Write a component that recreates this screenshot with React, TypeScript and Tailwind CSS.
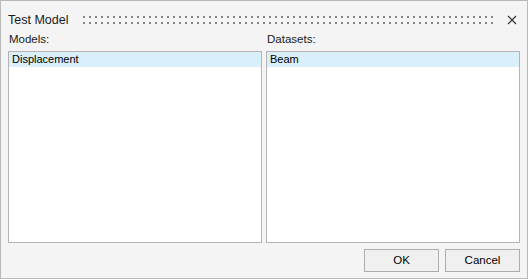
import React from "react";

const font = { fontFamily: '"Liberation Sans", Arial, sans-serif' };

function Grip() {
  const dots = Array.from({ length: 70 });
  return (
    <div className="flex flex-col gap-[4px] overflow-hidden flex-1 ml-[15px] mr-[12px]">
      {[0, 1].map((r) => (
        <div key={r} className="flex gap-[4px]">
          {dots.map((_, i) => (
            <div key={i} className="w-[2px] h-[2px] shrink-0 bg-[#858585]" />
          ))}
        </div>
      ))}
    </div>
  );
}

function List({ label, item }: { label: string; item: string }) {
  return (
    <div className="flex flex-col w-[254px]">
      <div className="h-[20px] text-[11.5px] leading-[16px] text-[#1a1a1a] pl-[1px]">{label}</div>
      <div className="h-[192px] border border-[#b4b4b4] bg-white p-0">
        <div className="h-[15px] bg-[#d9f0fa] text-[11px] leading-[15px] text-black pl-[3px]">{item}</div>
      </div>
    </div>
  );
}

export default function App() {
  return (
    <div
      className="w-[528px] h-[279px] border border-[#b9b9b9] bg-[#f4f4f4] flex flex-col px-[7px]"
      style={font}
    >
      <div className="h-[36px] flex items-center pt-[2px]">
        <span className="text-[12.5px] text-[#1a1a1a] leading-[16px]">Test Model</span>
        <Grip />
        <svg width="10" height="10" viewBox="0 0 10 10" className="mr-[3px]">
          <path d="M1 1 L9 9 M9 1 L1 9" stroke="#333" strokeWidth="1.2" />
        </svg>
      </div>
      <div className="flex gap-[4px] -mt-[6px]">
        <List label="Models:" item="Displacement" />
        <List label="Datasets:" item="Beam" />
      </div>
      <div className="flex justify-end gap-[6px] mt-[6px]">
        <button className="w-[75px] h-[23px] border border-[#adadad] bg-[#f0f0f0] text-[11.5px] text-black">OK</button>
        <button className="w-[75px] h-[23px] border border-[#adadad] bg-[#f0f0f0] text-[11.5px] text-black">Cancel</button>
      </div>
    </div>
  );
}
